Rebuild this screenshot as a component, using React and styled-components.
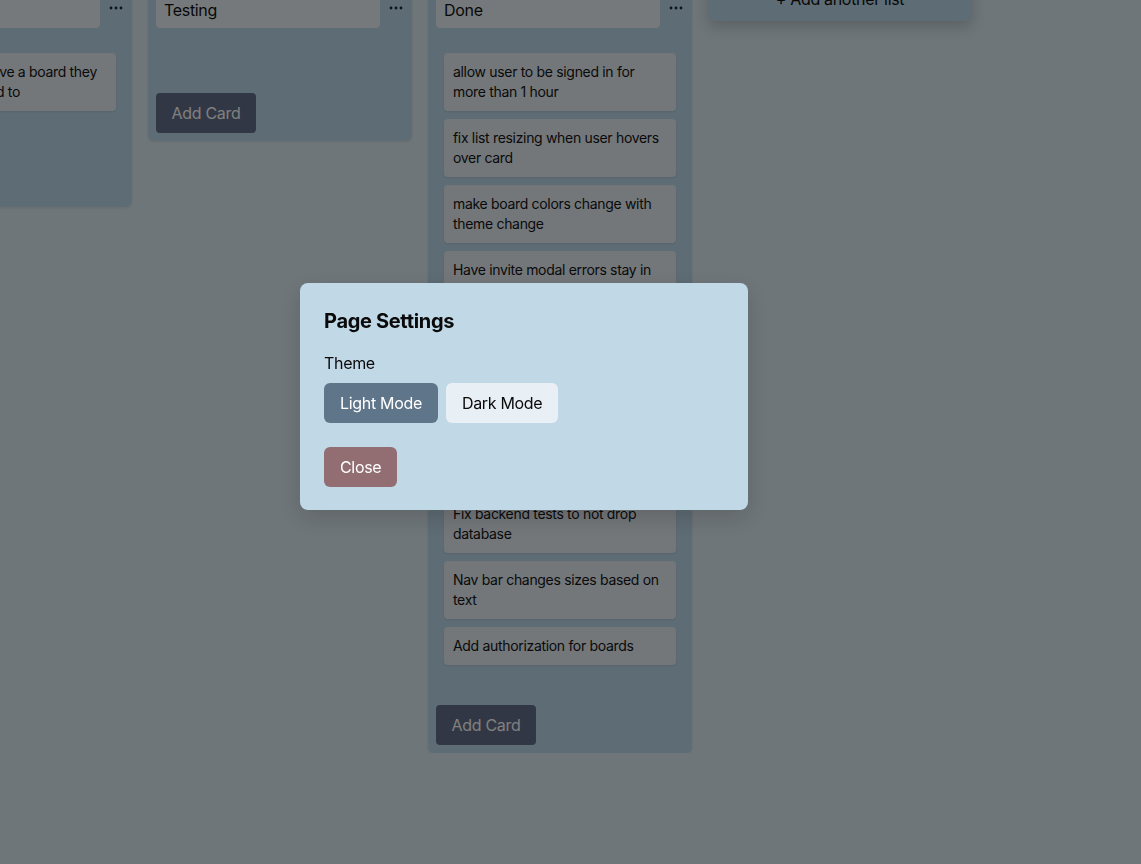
import React from "react";
import styled, { createGlobalStyle } from "styled-components";

const GlobalStyle = createGlobalStyle`
  html, body {
    margin: 0;
    padding: 0;
    overflow: hidden;
    background: #deecf2;
    font-family: Inter, "Noto Sans", "Liberation Sans", sans-serif;
    letter-spacing: -0.02em;
  }
  * { box-sizing: border-box; }
  button { letter-spacing: inherit; }
`;

const Board = styled.div`
  display: flex;
  align-items: flex-start;
  gap: 16px;
  margin: -16px 0 0 -132px;
  width: max-content;
`;

const Column = styled.div`
  width: 264px;
  flex: none;
  padding: 8px;
  background: #bcd8ea;
  border-radius: 6px;
  box-shadow: 0 1px 3px rgba(0, 0, 0, 0.08);
`;

const ColumnHeader = styled.div`
  display: flex;
  align-items: flex-start;
  justify-content: space-between;
`;

const TitleBox = styled.div`
  width: 224px;
  height: 36px;
  padding: 0 8px;
  line-height: 36px;
  font-size: 16px;
  color: #111;
  background: #edf3f7;
  border-radius: 4px;
`;

const DotsButton = styled.button`
  width: 16px;
  height: 31px;
  padding: 0;
  border: none;
  background: none;
  display: flex;
  align-items: center;
  justify-content: center;
  color: #1f2933;
`;

const CardList = styled.div`
  display: flex;
  flex-direction: column;
  gap: 8px;
  margin-top: 25px;
  padding: 0 8px ${(p) => p.$bottom || 8}px;
`;

const Card = styled.div`
  padding: 9px;
  font-size: 14px;
  line-height: 20px;
  color: #141414;
  background: #e6eef4;
  border-radius: 4px;
  box-shadow: 0 1px 2px rgba(0, 0, 0, 0.08);
`;

const AddCardButton = styled.button`
  display: block;
  margin-top: 32px;
  width: 100px;
  height: 40px;
  border: none;
  border-radius: 4px;
  background: #626e88;
  color: #ffffff;
  font-family: inherit;
  font-size: 16px;
`;

const AddListButton = styled.button`
  width: 264px;
  flex: none;
  height: 37px;
  padding: 0 0 7px;
  border: none;
  border-radius: 6px;
  background: #bcd8ea;
  color: #111;
  font-family: inherit;
  font-size: 16px;
  box-shadow: 0 6px 14px rgba(0, 0, 0, 0.18);
`;

const Overlay = styled.div`
  position: fixed;
  inset: 0;
  background: rgba(0, 0, 0, 0.5);
`;

const Modal = styled.div`
  position: absolute;
  left: 300px;
  top: 283px;
  width: 448px;
  padding: 24px 24px 23px;
  background: #c1d8e7;
  border-radius: 8px;
  box-shadow: 0 8px 24px rgba(0, 0, 0, 0.15);
`;

const ModalTitle = styled.h2`
  margin: 0;
  font-size: 20px;
  line-height: 28px;
  font-weight: 700;
  color: #0a0a0a;
`;

const Label = styled.div`
  margin-top: 16px;
  font-size: 16px;
  line-height: 24px;
  color: #0a0a0a;
`;

const ButtonRow = styled.div`
  display: flex;
  gap: 8px;
  margin-top: 8px;
`;

const ModalButton = styled.button`
  height: 40px;
  padding: 0 16px;
  border: none;
  border-radius: 6px;
  font-family: inherit;
  font-size: 16px;
  background: ${(p) => p.$bg};
  color: ${(p) => p.$fg};
`;

const CloseRow = styled.div`
  margin-top: 24px;
`;

const Dots = () => (
  <svg width="14" height="4" viewBox="0 0 14 4">
    <circle cx="2" cy="2" r="1.4" fill="currentColor" />
    <circle cx="7" cy="2" r="1.4" fill="currentColor" />
    <circle cx="12" cy="2" r="1.4" fill="currentColor" />
  </svg>
);

const lists = [
  {
    title: "In Progress",
    cards: ["User can only have a board they have been invited to"],
    bottom: 16,
  },
  { title: "Testing", cards: [] },
  {
    title: "Done",
    cards: [
      "allow user to be signed in for more than 1 hour",
      "fix list resizing when user hovers over card",
      "make board colors change with theme change",
      "Have invite modal errors stay in the modal",
      "Remove member from board when they leave it",
      "Show error message to user when login fails",
      "Fix card order",
      "Fix backend tests to not drop database",
      "Nav bar changes sizes based on text",
      "Add authorization for boards",
    ],
  },
];

const List = ({ list }) => (
  <Column>
    <ColumnHeader>
      <TitleBox>{list.title}</TitleBox>
      <DotsButton>
        <Dots />
      </DotsButton>
    </ColumnHeader>
    <CardList $bottom={list.bottom}>
      {list.cards.map((c) => (
        <Card key={c}>{c}</Card>
      ))}
    </CardList>
    <AddCardButton>Add Card</AddCardButton>
  </Column>
);

const App = () => {
  return (
    <>
      <GlobalStyle />
      <Board>
        {lists.map((l) => (
          <List key={l.title} list={l} />
        ))}
        <AddListButton>+ Add another list</AddListButton>
      </Board>
      <Overlay>
        <Modal>
          <ModalTitle>Page Settings</ModalTitle>
          <Label>Theme</Label>
          <ButtonRow>
            <ModalButton $bg="#5f7589" $fg="#ffffff">
              Light Mode
            </ModalButton>
            <ModalButton $bg="#e8f0f6" $fg="#0a0a0a">
              Dark Mode
            </ModalButton>
          </ButtonRow>
          <CloseRow>
            <ModalButton $bg="#926e72" $fg="#ffffff">
              Close
            </ModalButton>
          </CloseRow>
        </Modal>
      </Overlay>
    </>
  );
};

export default App;
